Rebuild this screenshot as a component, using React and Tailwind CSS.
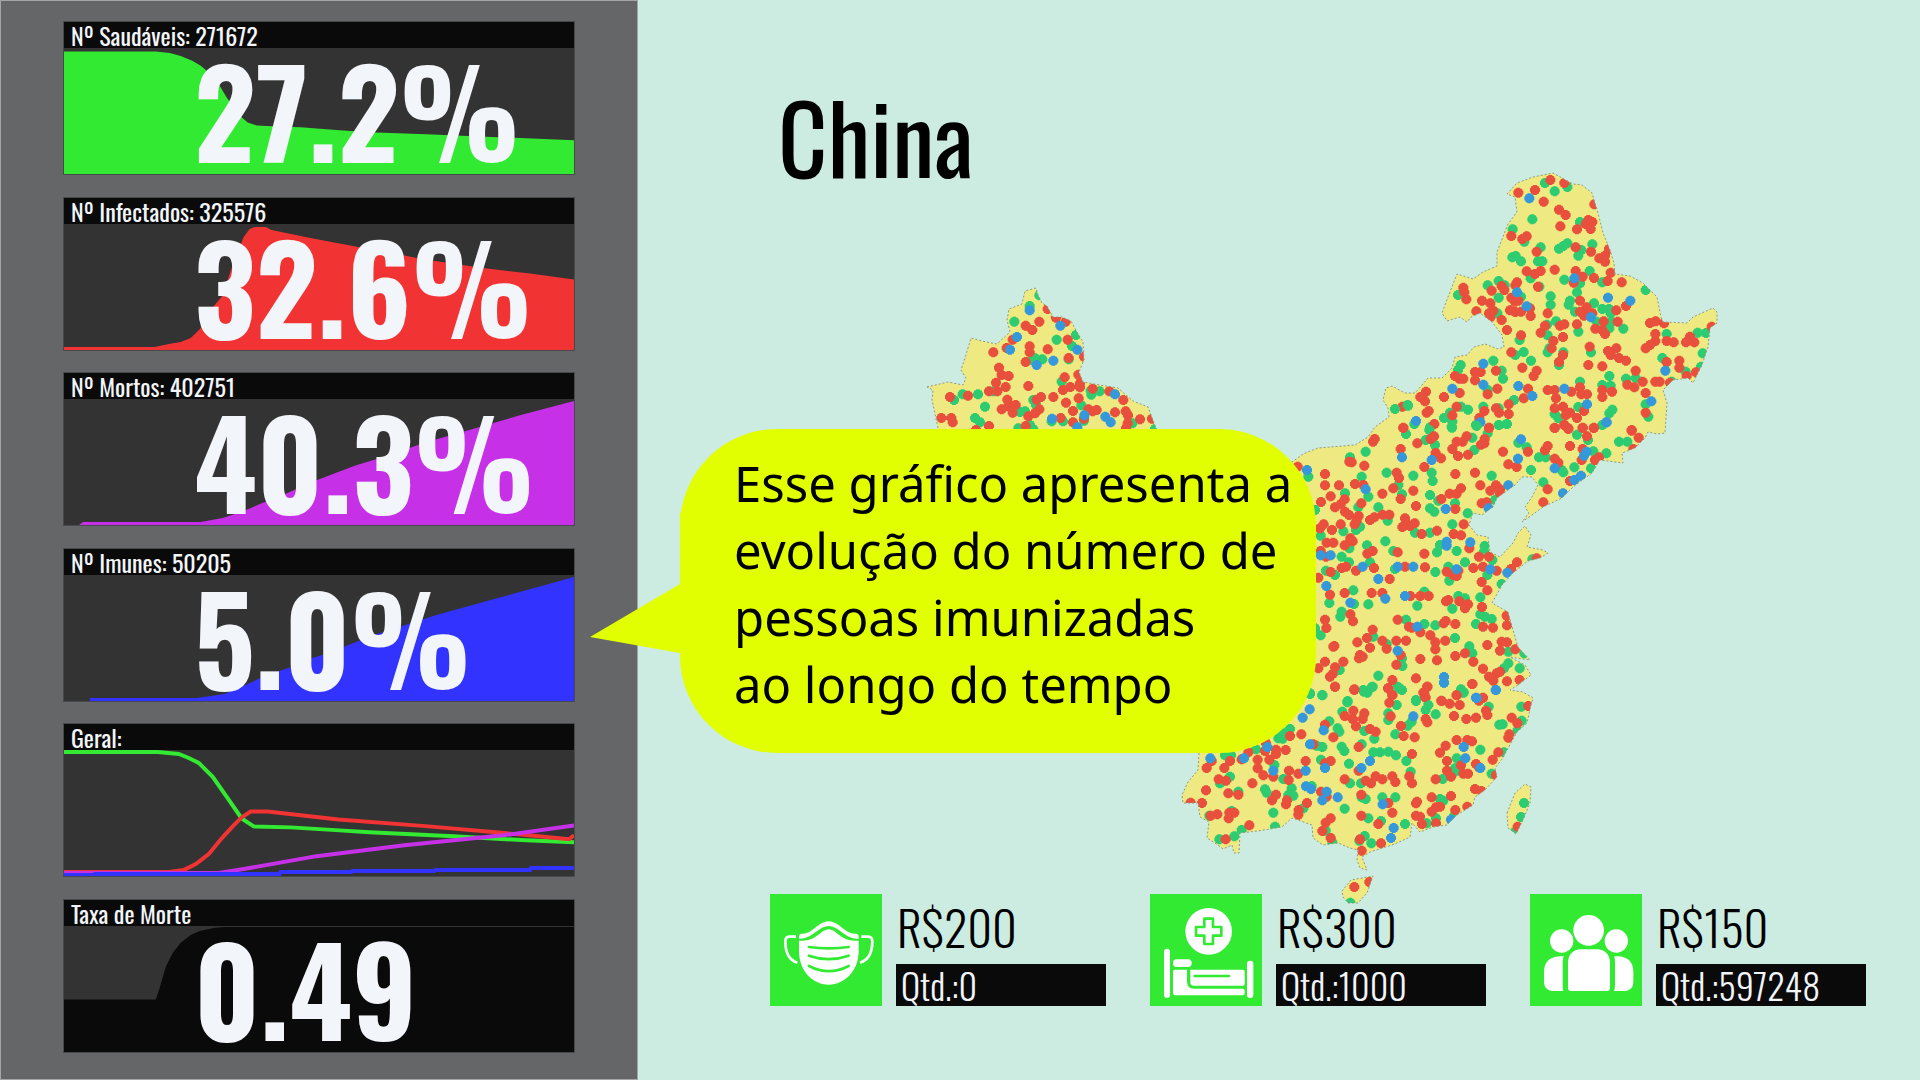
const stats = [
  {
    title: 'Nº Saudáveis: 271672',
    value: '27.2%',
    color: '#33ea33',
    area: 'M0,127 V3.5 H92 L106,5 117,8 129,13 137,18 150,29 156,38 163,50 176,68 184,75 193,78 214,79 237,80 276,83 306,85 363,87 463,91 511,93 V127Z',
  },
  {
    title: 'Nº Infectados: 325576',
    value: '32.6%',
    color: '#f23333',
    area: 'M0,127 V124 H91 L105,121 117,119 127,115 136,106 150,83 159,72 167,47 180,13 186,5 191,3 202,3 208,6 247,14 304,25 333,30 357,35 418,44 467,50 511,56 V127Z',
  },
  {
    title: 'Nº Mortos: 402751',
    value: '40.3%',
    color: '#c631e7',
    area: 'M15,127 L19,124 H137 L159,120 180,113 198,105 221,96 253,82 292,67 325,57 361,44 414,29 455,17 511,2 V127Z',
  },
  {
    title: 'Nº Imunes: 50205',
    value: '5.0%',
    color: '#3333ff',
    area: 'M26,127 V124 H133 L161,120 188,108 200,102 233,91 239,87 263,79 294,67 306,62 374,40 443,21 511,2 V127Z',
  },
  {
    title: 'Geral:',
    lines: [
      { color: '#33ea33', d: 'M0,2 H94 L115,4 125,8 135,13 149,27 165,50 178,69 190,77 227,78 276,81 306,83 390,87 463,91 511,93' },
      { color: '#f23333', d: 'M0,123 H105 L120,121 132,115 145,105 158,89 170,76 178,68 187,62 204,62 275,70 365,77 455,85 506,90 511,86' },
      { color: '#c631e7', d: 'M0,124 H155 L180,120 253,107 341,96 440,86 511,76' },
      { color: '#3333ff', d: 'M0,126 H30 L31,125 H216 L217,123 H288 L289,122 H371 L372,121 H467 L468,119 H511' },
    ],
  },
  {
    title: 'Taxa de Morte',
    value: '0.49',
    color: '#0a0a0a',
    area: 'M0,127 V74 H92 L96,62 102,41 109,27 117,17 127,9 136,5 150,2 160,1 H511 V127Z',
  },
];

function StatCard({ title, value, color, area, lines }) {
  return (
    <section className="relative border border-[#48494a] bg-[#333333]">
      <h2 className="flex h-[26px] items-center bg-[#0a0a0a] pl-[7px] text-[24px] leading-[26px] font-normal text-[#f2f5f9]">{title}</h2>
      <svg className="block h-[126px] w-full" viewBox="0 0 511 127" preserveAspectRatio="none" aria-hidden="true">
        {area && <path d={area} fill={color} />}
        {lines?.map((l) => (
          <path key={l.color} d={l.d} fill="none" stroke={l.color} strokeWidth="4" />
        ))}
      </svg>
      {value && (
        <p className="absolute top-[24px] left-[130px] text-[120px] leading-[126px] font-bold text-[#f2f5f9]">{value}</p>
      )}
    </section>
  );
}

const MAINLAND =
  'M927,387 948,382 963,385 966,378 961,370 965,358 971,338 982,341 997,344 1010,332 1007,320 1009,309 1022,304 1025,291 1036,288 1038,295 1042,303 1047,306 1053,317 1062,317 1071,321 1077,332 1083,342 1084,360 1079,372 1083,382 1100,385 1118,388 1133,401 1148,407 1156,428 1200,470 1292,462 1303,454 1318,448 1355,445 1368,437 1375,427 1389,417 1388,408 1383,400 1386,388 1392,386 1405,393 1415,393 1428,378 1442,378 1452,368 1455,357 1467,355 1474,347 1485,344 1498,349 1504,347 1502,335 1492,322 1480,313 1471,317 1467,322 1460,317 1447,321 1442,313 1448,297 1457,274 1473,279 1483,272 1497,266 1497,252 1508,224 1517,212 1515,197 1507,194 1517,183 1533,177 1553,173 1573,184 1582,185 1592,193 1598,213 1603,233 1610,250 1614,263 1615,274 1630,276 1643,283 1657,297 1661,317 1663,322 1687,323 1693,317 1713,308 1717,312 1717,323 1710,328 1708,347 1702,365 1693,383 1688,378 1673,380 1663,390 1667,403 1665,433 1657,434 1648,432 1645,438 1635,448 1622,453 1623,463 1608,461 1600,460 1592,473 1573,487 1562,498 1543,507 1532,515 1522,522 1529,513 1525,507 1532,497 1538,485 1532,477 1522,477 1515,485 1497,498 1493,507 1482,515 1473,513 1469,525 1477,535 1488,537 1490,552 1500,557 1513,543 1518,533 1525,526 1531,535 1527,547 1543,550 1548,553 1540,558 1528,561 1513,573 1502,585 1492,603 1508,612 1513,630 1518,647 1530,660 1510,657 1525,665 1531,675 1518,685 1510,690 1523,692 1533,698 1531,705 1527,723 1517,732 1507,750 1503,758 1495,768 1497,777 1485,790 1475,797 1473,805 1457,815 1447,825 1433,827 1420,832 1412,823 1410,837 1395,844 1370,852 1362,857 1367,870 1360,868 1357,860 1358,850 1350,848 1338,843 1323,845 1313,838 1312,825 1292,818 1282,827 1258,831 1240,833 1239,853 1234,853 1232,845 1223,849 1215,843 1207,838 1209,822 1200,817 1198,803 1183,803 1182,795 1188,782 1198,770 1199,753 1150,700 1000,640 945,520 938,428 932,400 933,390Z';
const HAINAN = 'M1342,891 1351,880 1373,876 1367,893 1358,903 1348,903 1343,897Z';
const TAIWAN = 'M1507,813 1515,793 1525,784 1531,787 1530,803 1523,820 1516,834 1508,828Z';

// Population dots, sampled per map tile. Coordinates are in thirds of a map unit from the tile origin.
const TILES = [
  {
    x: 900, y: 270,
    green: '389,108 343,155 418,76 470,209 528,195 516,228 427,268 405,265 395,270 506,268 485,335 572,362 574,374 599,364 188,373 162,390 234,373 255,410 225,444 240,457 280,364 400,390 408,405 360,426 375,424 455,454 489,454 552,452 544,406 390,465 355,475 697,460 765,477 400,478',
    red: '443,117 418,155 377,167 397,180 468,143 497,155 338,209 320,234 280,247 389,229 389,247 443,238 377,276 503,209 506,264 552,260 297,293 305,315 326,318 288,338 317,351 292,364 267,364 385,348 494,322 489,360 511,351 540,340 540,352 535,314 150,381 204,377 322,389 347,405 326,408 305,418 338,428 410,389 423,381 460,381 418,418 405,430 385,439 498,398 536,385 519,423 578,356 628,364 670,390 565,418 590,420 578,424 645,427 677,424 684,436 683,460 720,448 124,444 154,444 158,457 267,468 228,480 377,468 482,444 519,457 552,446 678,475 756,446',
    blue: '389,121 481,167 351,201 330,239 532,239 460,272 410,285 645,373 456,446 553,436 616,440 632,457 532,472',
  },
  {
    x: 1400, y: 150,
    green: '435,99 502,111 464,124 397,208 338,238 540,216 373,275 422,292 502,280 477,296 490,288 577,283 544,300 535,317 347,318 337,322 363,334 414,334 427,334 392,385 493,389 569,363 607,397 540,400 263,406 296,393 314,406 296,443 174,435 363,440 418,410 531,427 452,439 452,464 510,452 506,464 525,485 582,460 607,477 627,477 632,490 590,515 635,515 670,536 628,535 535,545 468,514 441,524 443,556 443,607 448,595 292,490 359,570 346,615 371,606 393,632 490,607 477,645 573,607 280,632 182,645 174,660 305,662 309,686 628,678 607,705 632,707 540,695 678,686 707,684 800,552 893,548 918,549 787,624 857,665 908,610 903,650 815,695 737,420 24,767 43,822 183,770 204,779 150,788 132,804 157,815 155,830 250,770 263,720 342,750 296,775 296,825 320,822 228,825 464,792 475,804 535,771 628,790 637,779 607,825 737,763 745,800 90,832',
    red: '451,90 493,99 405,120 355,128 431,155 477,179 497,195 583,163 481,229 531,238 565,210 577,216 572,237 557,222 334,258 380,259 367,267 410,305 527,292 573,305 627,297 598,325 615,317 615,335 632,368 623,393 582,384 665,397 380,364 405,372 422,363 464,359 527,363 548,380 521,398 414,410 351,397 346,406 305,408 313,420 275,422 190,413 193,427 199,448 246,452 271,460 334,443 355,452 345,455 229,484 267,490 280,482 271,502 305,510 330,481 346,486 363,485 392,498 390,475 443,490 321,540 363,556 540,452 560,472 540,485 552,497 577,490 611,514 653,515 649,481 678,468 586,536 607,540 615,552 531,523 493,523 480,527 435,527 422,548 489,561 460,573 455,595 489,615 477,636 569,590 565,645 607,649 624,603 649,595 632,615 657,624 678,632 707,662 728,695 682,704 703,712 766,695 779,695 750,519 767,514 792,520 766,552 766,573 737,595 750,585 800,573 821,577 870,560 883,577 858,577 800,636 838,632 838,653 860,678 888,667 935,530 810,698 334,607 367,653 410,662 401,678 225,666 242,666 225,691 165,678 178,686 190,686 288,662 292,716 263,733 179,729 132,741 78,725 61,741 75,754 7,770 86,783 80,788 170,770 157,796 103,822 10,833 253,783 238,804 288,775 297,788 326,763 326,792 371,745 384,716 267,833 443,720 464,720 468,745 514,725 540,712 544,733 561,733 607,720 607,741 636,725 464,775 489,770 510,788 497,796 531,804 552,783 464,833 493,825 505,835 548,833 582,833 695,840 737,729 737,788',
    blue: '388,145 523,385 351,427 380,469 624,443 691,452 573,502 250,641 250,704 157,716 355,708 397,738 493,716 561,763 620,817 796,662 754,754 48,813 241,817',
  },
  {
    x: 1280, y: 370,
    green: '383,105 345,117 378,192 448,180 437,210 465,225 257,245 210,262 245,320 320,308 400,317 455,308 458,333 577,203 583,240 623,190 516,173 590,168 657,165 681,162 715,218 740,232 777,262 797,262 753,300 635,317 891,194 924,210 940,244 979,250 1017,215 1042,215 850,307 883,292 933,295 845,300 790,337 645,390 563,430 517,463 525,400 475,392 450,375 450,415 463,425 265,380 195,370 235,412 295,412 325,440 323,452 355,345 366,373 85,320 105,420 190,484 122,497 228,480 240,470 405,488 450,488 316,514 261,526 208,535 185,560 207,577 270,577 138,602 165,615 340,543 345,597 480,525 471,547 530,543 614,528 612,545 555,577 637,570 505,590 466,606 508,632 622,615 665,642 757,568 220,661 222,702 265,703 148,699 185,725 181,740 433,665 412,707 535,678 555,685 517,716 601,682 601,733 615,740 635,747 588,762 378,749 433,762 466,766 525,804 122,796 280,800 320,822 568,829 577,850 366,865 367,888 179,900 295,917 353,950 366,960 278,950 260,965 250,960 492,938 543,958 551,967 685,880 672,895 719,895 685,845 733,850 127,975 90,970 408,990 203,993 105,775',
    red: '370,174 284,207 279,215 362,237 412,220 452,207 462,199 467,249 483,265 433,291 517,237 530,215 548,215 560,199 534,258 564,254 614,207 603,224 613,220 627,174 669,245 744,245 803,228 795,241 824,266 835,278 870,228 824,174 853,165 865,177 908,174 921,199 941,174 1055,182 1076,203 1060,237 908,237 905,270 945,270 957,262 208,275 215,277 253,287 53,290 135,312 135,346 177,346 225,342 250,345 350,308 357,324 340,355 307,371 400,362 362,387 408,408 526,312 585,308 601,346 648,346 660,358 631,362 660,370 543,355 509,371 530,371 484,387 526,417 620,397 605,400 685,283 710,291 803,358 790,397 870,333 244,400 194,388 165,412 182,403 152,379 123,396 195,425 207,435 236,438 224,463 230,452 270,450 283,442 308,434 328,434 375,445 380,463 404,460 367,471 390,468 425,492 471,482 521,492 543,496 551,463 131,463 120,475 156,480 182,463 140,518 160,518 211,505 218,514 194,526 122,543 262,551 278,543 353,547 433,551 568,535 597,560 627,560 580,594 609,590 650,602 500,605 520,615 530,618 535,602 435,592 375,590 282,594 228,602 185,594 198,590 152,606 115,623 138,560 329,627 605,636 622,661 711,577 693,597 770,565 194,669 150,674 275,669 307,669 391,678 421,678 446,678 498,694 505,690 538,694 564,703 555,715 606,711 680,737 681,766 639,773 609,770 491,760 497,753 526,762 387,770 395,773 421,787 451,796 466,817 466,838 496,812 353,749 378,812 349,812 307,812 320,836 278,779 261,804 270,833 232,817 219,754 211,733 135,749 139,774 163,828 160,830 240,855 237,865 248,860 190,875 165,892 135,875 115,895 150,920 165,950 158,912 223,958 362,855 349,884 421,867 471,871 526,858 555,850 580,875 609,896 622,825 665,815 681,817 660,842 706,838 408,925 337,930 324,955 337,975 442,950 433,967 437,983 484,992 530,975 577,942 627,920 650,910 660,905 640,932 681,934 719,930 609,983',
    blue: '366,262 81,300 257,358 455,270 497,417 626,415 685,346 714,266 723,208 824,295 920,245 912,257 883,330 903,317 849,370 979,157 122,556 152,556 248,590 295,627 353,590 400,590 139,648 500,515 500,527 571,517 530,598 631,598 682,608 211,698 316,686 375,678 412,770 353,842 492,921 647,960 588,983',
  },
  {
    x: 1160, y: 680,
    green: '450,42 487,46 562,67 547,95 508,124 612,35 635,22 622,38 710,75 718,25 685,100 685,120 768,63 805,75 797,90 827,103 755,125 743,137 706,163 613,153 643,176 533,145 538,155 390,147 370,160 355,175 368,176 487,201 470,197 288,208 545,200 553,213 605,193 640,217 660,217 685,215 708,226 739,243 567,251 483,239 343,255 210,290 180,310 195,226 213,226 235,335 315,328 320,338 395,325 385,345 400,347 370,297 340,398 148,407 215,393 345,440 223,469 245,450 178,478 430,385 554,386 570,310 603,310 605,352 617,357 667,352 706,352 752,275 848,297 890,235 885,265 885,275 961,209 986,80 903,30 910,38 1084,80 1085,122 1028,133 1018,134 1073,150 1032,217 995,281 840,357 850,362 828,415 800,430 882,408 735,432 663,423 625,415 634,490 614,468 598,482 517,487 497,452 571,668 1092,369 1083,411 1065,455 455,318',
    red: '525,20 583,30 685,25 697,45 688,68 802,20 790,38 795,50 845,63 869,71 899,75 890,46 968,54 957,62 937,12 978,92 982,105 882,108 919,117 948,113 1105,78 1055,113 1072,130 1048,163 1045,173 1015,217 998,239 1008,286 797,117 802,127 723,138 764,172 731,168 647,155 630,147 692,109 613,100 608,117 580,92 578,117 554,108 588,139 520,172 495,134 424,163 390,168 460,193 596,201 756,222 437,243 512,243 495,250 377,210 348,209 348,222 318,190 315,213 328,239 293,239 265,217 293,265 310,286 340,290 387,272 386,300 415,281 245,238 210,243 193,264 155,243 140,264 176,298 198,302 277,310 138,331 205,340 235,344 348,344 336,361 381,361 378,373 441,369 416,390 415,404 126,369 92,368 152,407 172,403 208,398 223,398 206,415 268,436 197,478 483,335 500,350 512,415 497,428 487,453 512,474 600,478 605,512 604,407 604,344 685,369 697,398 655,432 663,490 554,298 596,272 617,302 633,310 647,289 667,298 697,289 706,306 748,289 756,310 857,197 840,218 861,243 861,272 873,290 903,256 910,281 924,281 948,252 957,262 890,180 922,180 936,184 827,298 815,352 873,348 771,365 768,370 840,380 828,382 815,395 886,390 945,327 964,333 922,380 768,407 780,410 786,432 828,430 583,621 628,606 1073,440',
    blue: '449,88 428,113 491,151 450,193 322,201 252,235 151,235 340,272 437,272 495,264 604,264 630,243 760,109 950,54 1008,30 911,201 916,235 961,264 438,319 453,327 500,335 487,361 533,352 668,373 701,444 693,474 873,419 852,8',
  },
];

// Stepped octagon drawn relative to a dot's centre.
const DOT = 'm-5,-15h10l2,3h3l2,3v2l3,2v10l-3,2v2l-2,3h-3l-2,3h-10l-2,-3h-3l-2,-3v-2l-3,-2v-10l3,-2v-2l2,-3h3z';

function Dots({ points, fill }) {
  return <path d={points.split(' ').map((p) => `M${p}${DOT}`).join('')} fill={fill} />;
}

function ChinaMap() {
  const shape = MAINLAND + HAINAN + TAIWAN;
  return (
    <svg className="pointer-events-none absolute top-[150px] left-[262px] h-[780px] w-[860px]" viewBox="900 150 860 780" role="img" aria-label="Mapa da China">
      <clipPath id="land"><path d={shape} /></clipPath>
      <path d={shape} fill="#eee980" />
      <g clipPath="url(#land)">
        {TILES.map((t) => (
          <g key={t.x} transform={`translate(${t.x} ${t.y}) scale(0.33333)`}>
            <Dots points={t.green} fill="#2ecc71" />
            <Dots points={t.red} fill="#e94f3d" />
            <Dots points={t.blue} fill="#3598db" />
          </g>
        ))}
      </g>
      <path d={shape} fill="none" stroke="#8b9a86" strokeWidth="1" strokeDasharray="2 2" />
    </svg>
  );
}

function MaskIcon() {
  return (
    <svg viewBox="0 0 336 336" className="size-full" fill="#fff" aria-hidden="true">
      <path d="M87,128 Q87,118 97,119 C130,120 140,84 176,82 C212,84 222,120 256,119 Q266,118 266,128 V134 C225,136 210,98 176,96 C142,98 127,136 87,134Z" />
      <path d="M87,140 C140,145 148,108 176,106 C204,108 212,145 266,140 V170 C266,230 225,271 176,272 C127,271 87,230 87,170Z" />
      <g fill="none" stroke="#33ea33" strokeWidth="8" strokeLinecap="round">
        <path d="M117,159 Q176,167 236,159" />
        <path d="M117,185 Q176,206 236,185" />
        <path d="M117,216 Q176,247 236,216" />
      </g>
      <g fill="none" stroke="#fff" strokeWidth="8">
        <path d="M78,128 H58 Q46,128 46,142 C46,175 55,198 82,206" />
        <path d="M274,128 H294 Q307,128 307,142 C307,175 298,198 270,206" />
      </g>
    </svg>
  );
}

function BedIcon() {
  return (
    <svg viewBox="0 0 336 336" className="size-full" fill="#fff" aria-hidden="true">
      <circle cx="176" cy="112" r="70" />
      <path d="M163,74 H189 V99 H214 V125 H189 V150 H163 V125 H138 V99 H163Z" fill="none" stroke="#33ea33" strokeWidth="8" strokeLinejoin="round" />
      <rect x="42" y="164" width="18" height="148" rx="9" />
      <rect x="291" y="200" width="19" height="112" rx="9" />
      <rect x="69" y="196" width="56" height="23" rx="11" />
      <path d="M74,227 H111 V264 Q112,283 130,284 H278 Q284,284 284,290 V298 Q284,304 278,304 H76 Q69,304 69,297 V232 Q69,227 74,227Z" />
      <path d="M121,227 H278 Q284,227 284,233 V269 Q284,275 278,275 H130 Q121,275 121,265Z" />
      <path d="M134,246 H237" stroke="#33ea33" strokeWidth="8" strokeLinecap="round" />
    </svg>
  );
}

function PeopleIcon() {
  return (
    <svg viewBox="0 0 336 336" className="size-full" fill="#fff" aria-hidden="true">
      <circle cx="176" cy="109" r="46" />
      <circle cx="95" cy="141" r="35" />
      <circle cx="259" cy="141" r="35" />
      <path d="M114,282 V205 Q116,170 150,166 H204 Q238,170 240,205 V282 Q240,291 231,291 H123 Q114,291 114,282Z" />
      <path d="M101,187 H88 Q42,190 42,235 V265 Q43,288 66,291 H100 Q98,282 98,272 V205 Q98,195 101,187Z" />
      <path d="M253,187 H266 Q310,190 310,235 V265 Q309,288 287,291 H252 Q255,282 255,272 V205 Q255,195 253,187Z" />
    </svg>
  );
}

const items = [
  { name: 'Máscaras', price: 'R$200', qty: 'Qtd.:0', Icon: MaskIcon },
  { name: 'Leitos', price: 'R$300', qty: 'Qtd.:1000', Icon: BedIcon },
  { name: 'Pessoas', price: 'R$150', qty: 'Qtd.:597248', Icon: PeopleIcon },
];

export default function App() {
  return (
    <div className='relative flex min-h-screen bg-[#cdece1] font-["Oswald","Roboto_Condensed",sans-serif]'>
      <aside className="flex w-[638px] shrink-0 flex-col justify-between border border-[#a3a6a6] bg-[#656668] px-[62px] pt-[20px] pb-[26px]">
        {stats.map((s) => <StatCard key={s.title} {...s} />)}
      </aside>

      <main className="relative flex flex-1 flex-col px-[132px] pt-[66px] pb-[74px]">
        <ChinaMap />
        <h1 className="relative pl-[8px] text-[96px] leading-[138px] font-normal text-black">China</h1>
        <ul className="relative mt-auto flex gap-[44px]">
          {items.map(({ name, price, qty, Icon }) => (
            <li key={name} className="flex w-[336px] shrink-0 gap-[14px]">
              <button type="button" aria-label={name} className="size-[112px] shrink-0 bg-[#33ea33]"><Icon /></button>
              <div className="flex flex-1 flex-col justify-between">
                <p className="pl-[1px] text-[48px] leading-[66px] font-light text-black">{price}</p>
                <p className="flex h-[42px] items-center bg-[#0a0a0a] pl-[5px] text-[36px] leading-[42px] font-light text-[#f2f5f9]">{qty}</p>
              </div>
            </li>
          ))}
        </ul>
      </main>

      <div role="tooltip" className="absolute top-[429px] left-[680px] h-[324px] w-[636px] rounded-[97px] bg-[#e1ff00] pt-[21px] pl-[54px]">
        <svg className="absolute top-[84px] left-[-90px] h-[140px] w-[92px]" viewBox="0 0 92 140" aria-hidden="true">
          <path d="M0,124 L90,71 V0 H92 V140 H90Z" fill="#e1ff00" />
        </svg>
        <p className='relative font-["Noto_Sans",sans-serif] text-[49px] leading-[67px] whitespace-nowrap text-black'>
          Esse gráfico apresenta a<br />evolução do número de<br />pessoas imunizadas<br />ao longo do tempo
        </p>
      </div>
    </div>
  );
}
